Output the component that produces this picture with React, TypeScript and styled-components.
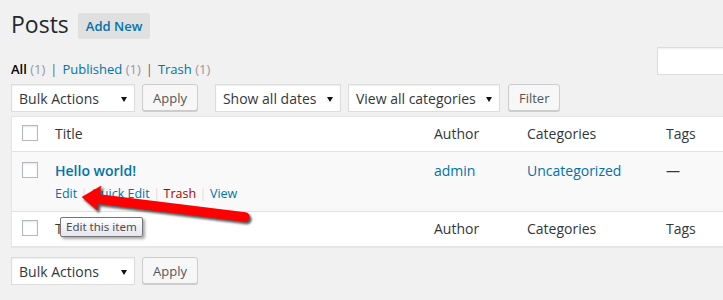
import styled, { createGlobalStyle } from 'styled-components';

const GlobalStyle = createGlobalStyle`
	html, body {
		margin: 0;
		padding: 0;
		background: #f1f1f1;
		overflow: hidden;
	}
	body {
		font-family: "Open Sans", "Noto Sans", sans-serif;
		color: #444;
	}
`

const columns = '33px 379px 93px 139px 1fr';

export default function App() {
	return (
		<Page>
			<GlobalStyle />
			<Header>
				<Heading>Posts</Heading>
				<AddNew>Add New</AddNew>
			</Header>
			<TopRow>
				<Views>
					<Current>All</Current> <Count>(1)</Count>
					<Sep>|</Sep>
					<ViewLink>Published</ViewLink> <Count>(1)</Count>
					<Sep>|</Sep>
					<ViewLink>Trash</ViewLink> <Count>(1)</Count>
				</Views>
				<SearchBox />
			</TopRow>
			<Toolbar $top={9} $bottom={4}>
				<Select $width={124}>Bulk Actions</Select>
				<Button>Apply</Button>
				<Spacer />
				<Select $width={126}>Show all dates</Select>
				<Select $width={152}>View all categories</Select>
				<Button $left={1}>Filter</Button>
			</Toolbar>
			<Table>
				<Row $head>
					<CheckCell><Checkbox /></CheckCell>
					<Cell>Title</Cell>
					<Cell>Author</Cell>
					<Cell>Categories</Cell>
					<Cell>Tags</Cell>
				</Row>
				<Row $alt>
					<CheckCell><Checkbox /></CheckCell>
					<Cell>
						<PostTitle>Hello world!</PostTitle>
						<Actions>
							<Action>Edit</Action>
							<ActionSep>|</ActionSep>
							<Action>Quick Edit</Action>
							<ActionSep>|</ActionSep>
							<Action $danger>Trash</Action>
							<ActionSep>|</ActionSep>
							<Action>View</Action>
						</Actions>
					</Cell>
					<Cell><Link>admin</Link></Cell>
					<Cell><Link>Uncategorized</Link></Cell>
					<Cell>—</Cell>
				</Row>
				<Row $foot>
					<CheckCell><Checkbox /></CheckCell>
					<Cell>Title</Cell>
					<Cell>Author</Cell>
					<Cell>Categories</Cell>
					<Cell>Tags</Cell>
				</Row>
			</Table>
			<Toolbar $top={10} $bottom={0}>
				<Select $width={124}>Bulk Actions</Select>
				<Button>Apply</Button>
			</Toolbar>

			<Tooltip>Edit this item</Tooltip>
			<Arrow viewBox="0 0 300 240" width={300} height={240}>
				<defs>
					<filter id="sh" x="-10%" y="-50%" width="120%" height="200%">
						<feGaussianBlur stdDeviation="1.3" />
					</filter>
				</defs>
				<g transform="translate(2 2.5)" fill="#222" stroke="#222" opacity="0.75" filter="url(#sh)">
					<line x1="99" y1="199" x2="245" y2="217" strokeWidth="9.5" strokeLinecap="round" />
					<polygon points="82,197 101,186 97,210" />
				</g>
				<g fill="#f00" stroke="#f00">
					<line x1="99" y1="199" x2="245" y2="217" strokeWidth="9.5" strokeLinecap="round" />
					<polygon points="82,197 101,186 97,210" strokeWidth="0.5" />
				</g>
			</Arrow>
		</Page>
	)
}

const Page = styled.div`
	position: relative;
	width: 808px;
	height: 300px;
	padding-left: 11px;
	box-sizing: content-box;
`

const Header = styled.div`
	display: flex;
	align-items: center;
	padding-top: 10px;
	height: 29px;
`

const Heading = styled.h1`
	margin: 0;
	font-size: 23px;
	font-weight: 400;
	line-height: 29px;
	color: #23282d;
`

const AddNew = styled.span`
	margin-left: 9px;
	margin-top: 2px;
	padding: 0 8px;
	height: 26px;
	display: flex;
	align-items: center;
	background: #e0e0e0;
	border-radius: 2px;
	color: #0073aa;
	font-size: 13px;
	font-weight: 600;
`

const TopRow = styled.div`
	display: flex;
	align-items: flex-start;
	justify-content: space-between;
	margin-top: 8px;
	height: 28px;
`

const Views = styled.div`
	margin-top: 13px;
	font-size: 13px;
	line-height: 18px;
	color: #666;
	white-space: pre;
`

const Current = styled.span`
	color: #000;
	font-weight: 600;
`

const ViewLink = styled.span`
	color: #0073aa;
`

const Count = styled.span`
	color: #999;
`

const Sep = styled.span`
	color: #666;
	margin: 0 5px;
`

const SearchBox = styled.div`
	width: 160px;
	height: 26px;
	background: #fff;
	border: 1px solid #ddd;
	box-shadow: inset 0 1px 2px rgba(0, 0, 0, 0.07);
`

const Toolbar = styled.div<{ $top: number; $bottom: number }>`
	display: flex;
	align-items: center;
	gap: 7px;
	margin-top: ${p => p.$top}px;
	margin-bottom: ${p => p.$bottom}px;
	height: 28px;
`

const Spacer = styled.div`
	width: 3px;
`

const Select = styled.div<{ $width: number }>`
	position: relative;
	box-sizing: border-box;
	width: ${p => p.$width}px;
	height: 28px;
	padding-left: 7px;
	display: flex;
	align-items: center;
	background: #fff;
	border: 1px solid #ddd;
	box-shadow: inset 0 1px 2px rgba(0, 0, 0, 0.07);
	font-size: 14px;
	color: #32373c;

	&::after {
		content: '';
		position: absolute;
		right: 7px;
		top: 12px;
		border-left: 3px solid transparent;
		border-right: 3px solid transparent;
		border-top: 5px solid #111;
	}
`

const Button = styled.div<{ $left?: number }>`
	box-sizing: border-box;
	height: 27px;
	margin-bottom: 1px;
	margin-left: ${p => p.$left || 0}px;
	padding: 0 10px;
	display: flex;
	align-items: center;
	background: #f7f7f7;
	border: 1px solid #ccc;
	border-radius: 3px;
	box-shadow: 0 1px 0 #ccc;
	font-size: 13px;
	color: #555;
`

const Table = styled.div`
	background: #fff;
	border: 1px solid #e5e5e5;
	box-shadow: 0 1px 1px rgba(0, 0, 0, 0.04);
`

const Row = styled.div<{ $head?: boolean; $foot?: boolean; $alt?: boolean }>`
	display: grid;
	grid-template-columns: ${columns};
	height: ${p => (p.$alt ? 57 : 34)}px;
	padding-top: ${p => (p.$alt ? 2 : 0)}px;
	background: ${p => (p.$alt ? '#f9f9f9' : '#fff')};
	border-bottom: ${p => (p.$head ? '1px solid #e1e1e1' : 'none')};
	border-top: ${p => (p.$foot ? '1px solid #e1e1e1' : 'none')};
	font-size: 14px;
	color: #32373c;
`

const Cell = styled.div`
	padding: 7px 10px 8px;
	line-height: 19.6px;
	white-space: nowrap;
`

const CheckCell = styled.div`
	padding: 8px 0 0 10px;
`

const Checkbox = styled.div`
	width: 14px;
	height: 14px;
	border: 1px solid #b4b9be;
	background: #fff;
	box-shadow: inset 0 1px 2px rgba(0, 0, 0, 0.1);
`

const PostTitle = styled.div`
	color: #0073aa;
	font-weight: 600;
`

const Actions = styled.div`
	display: flex;
	padding-top: 4px;
	font-size: 12.5px;
	line-height: 18px;
`

const Action = styled.span<{ $danger?: boolean }>`
	color: ${p => (p.$danger ? '#a00' : '#0073aa')};
`

const ActionSep = styled.span`
	color: #ddd;
	margin: 0 3.5px;
`

const Link = styled.span`
	color: #0073aa;
`

const Tooltip = styled.div`
	position: absolute;
	left: 60px;
	top: 217px;
	padding: 1px 5px 2px;
	background: linear-gradient(#ffffff, #e4e5f0);
	border: 1px solid #767676;
	border-radius: 2px;
	box-shadow: 2px 2px 3px rgba(0, 0, 0, 0.35);
	font-family: "Noto Sans", "DejaVu Sans", sans-serif;
	font-size: 11.5px;
	line-height: 15px;
	color: #4c4c4c;
`

const Arrow = styled.svg`
	position: absolute;
	left: 0;
	top: 0;
	pointer-events: none;
`
